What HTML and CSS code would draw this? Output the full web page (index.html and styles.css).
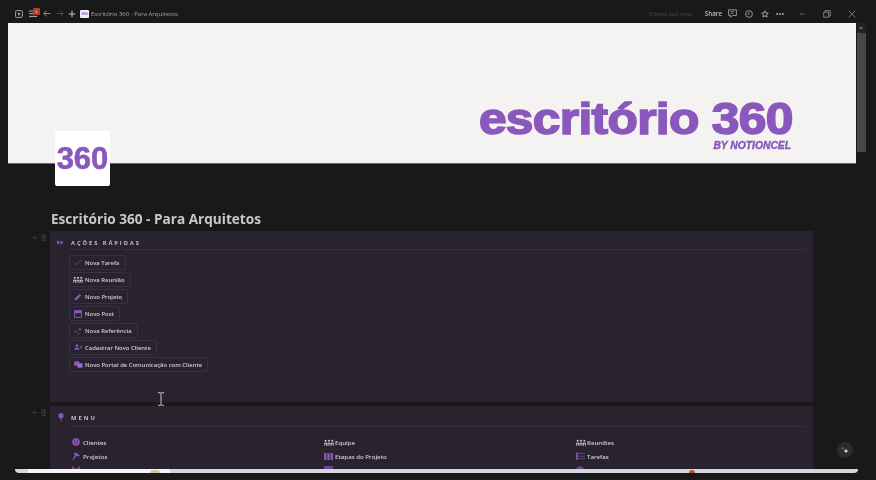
FILE: index.html
```html
<!DOCTYPE html>
<html lang="pt">
<head>
<meta charset="utf-8">
<title>Escritório 360 - Para Arquitetos</title>
<link rel="stylesheet" href="styles.css">
</head>
<body>
<svg class="sprite" width="0" height="0">
  <symbol id="people" viewBox="0 0 12 8"><g fill="currentColor"><circle cx="2" cy="2" r="1.2"/><circle cx="6" cy="2" r="1.2"/><circle cx="10" cy="2" r="1.2"/><path d="M.3 8V4.2h3.4V8h-1V5.5h-1.4V8zM4.3 8V4.2h3.4V8h-1V5.5H5.3V8zM8.3 8V4.2h3.4V8h-1V5.5H9.3V8z"/></g></symbol>
</svg>
<div class="app">
  <header class="titlebar">
    <div class="tb-left">
      <svg class="tb-a" width="8" height="8" viewBox="0 0 8 8"><rect x=".6" y=".6" width="6.8" height="6.8" rx="1" fill="none" stroke="#a0a0a0" stroke-width="1"/><path d="M2.6 2.4l3.2 1.6-1.4.5-.5 1.5z" fill="#cfcfcf"/></svg>
      <span class="menu-ic">
        <svg width="9" height="9" viewBox="0 0 9 9"><path d="M0 2h8M0 4.7h8M0 7.4h8" stroke="#b4b4b4" stroke-width="1"/></svg>
        <span class="badge">4</span>
      </span>
      <svg class="tb-b" width="8" height="9" viewBox="0 0 8 9"><path d="M7.5 4.5H1M3.8 1.5l-3 3 3 3" fill="none" stroke="#8c8c8c" stroke-width="1"/></svg>
      <svg class="tb-c" width="8" height="9" viewBox="0 0 8 9"><path d="M.5 4.5H7M4.2 1.5l3 3-3 3" fill="none" stroke="#4a4a4a" stroke-width="1"/></svg>
      <svg class="tb-c" width="8" height="8" viewBox="0 0 8 8"><path d="M4 .8v6.4M.8 4h6.4" stroke="#c8c8c8" stroke-width="1"/></svg>
      <span class="favicon">360</span>
      <span class="tb-title">Escritório 360 - Para Arquitetos</span>
    </div>
    <div class="tb-right">
      <span class="edited">Edited just now</span>
      <span class="share">Share</span>
      <svg width="9" height="9" viewBox="0 0 9 9"><path d="M.6.8h7.8v5.6H4.6L2.6 8.2V6.4h-2z" fill="none" stroke="#a0a0a0" stroke-width=".9"/><path d="M2.4 2.6h4M2.4 4.2h3" stroke="#a0a0a0" stroke-width=".7"/></svg>
      <svg width="8" height="8" viewBox="0 0 8 8"><circle cx="4" cy="4" r="3.4" fill="none" stroke="#a0a0a0" stroke-width=".9"/><path d="M4 2.2v2H2.6" fill="none" stroke="#a0a0a0" stroke-width=".8"/></svg>
      <svg class="tight" width="8" height="8" viewBox="0 0 10 10"><path d="M5 1l1.2 2.7 2.9.3-2.2 1.9.7 2.9L5 7.3 2.4 8.8l.7-2.9L.9 4l2.9-.3z" fill="none" stroke="#b4b4b4" stroke-width="1.1"/></svg>
      <svg width="8" height="4" viewBox="0 0 8 4"><circle cx="1.1" cy="2" r="1" fill="#adadad"/><circle cx="4" cy="2" r="1" fill="#adadad"/><circle cx="6.9" cy="2" r="1" fill="#adadad"/></svg>
      <span class="win-ctrls">
        <svg width="8" height="8" viewBox="0 0 8 8"><path d="M1.5 4h5" stroke="#666" stroke-width="1"/></svg>
        <svg width="8" height="8" viewBox="0 0 8 8"><path d="M.7 2.2h5v5h-5zM2 2V.7h5.3V6H6" fill="none" stroke="#8a8a8a" stroke-width=".9"/></svg>
        <svg width="8" height="8" viewBox="0 0 8 8"><path d="M.7.7l6.6 6.6M7.3.7L.7 7.3" stroke="#7c7c7c" stroke-width=".9"/></svg>
      </span>
    </div>
  </header>

  <div class="main">
    <div class="page">
      <section class="banner">
        <div class="wordmark">
          <span class="wm-title">escritório 360</span>
          <span class="wm-by">BY NOTIONCEL</span>
        </div>
      </section>
      <div class="content">
        <div class="page-icon">360</div>
        <h1 class="page-title">Escritório 360 - Para Arquitetos</h1>

        <section class="panel panel-actions">
          <span class="gutter"><i class="plus">+</i><i class="grip"></i></span>
          <h2 class="panel-head">
            <svg class="head-ic" width="7" height="5" viewBox="0 0 9 6"><path d="M0 0l4 3-4 3zM4.5 0l4 3-4 3z" fill="#8a56b8"/></svg>
            <span>AÇÕES RÁPIDAS</span>
          </h2>
          <div class="buttons">
            <div class="btn"><svg class="ic" width="8" height="7" viewBox="0 0 8 7"><path d="M.8 3.8l2 2L7.4 1" fill="none" stroke="#6f4a96" stroke-width=".9"/></svg>Nova Tarefa</div>
            <div class="btn"><svg class="ic wide"><use href="#people"/></svg>Nova Reunião</div>
            <div class="btn"><svg class="ic" width="8" height="8" viewBox="0 0 8 8"><path d="M.5 7.5l.6-2.2L5.6.8l1.6 1.6-4.5 4.5z" fill="#8a56b8"/></svg>Novo Projeto</div>
            <div class="btn"><svg class="ic" width="8" height="8" viewBox="0 0 8 8"><path d="M.6.6h6.8v6.8H.6z" fill="none" stroke="#8a56b8"/><path d="M.6.6h6.8v2.6H.6z" fill="#8a56b8"/></svg>Novo Post</div>
            <div class="btn"><svg class="ic" width="8" height="8" viewBox="0 0 8 8"><path d="M6 .5l.5 1.3 1.3.5-1.3.5L6 4.1l-.5-1.3-1.3-.5 1.3-.5z" fill="#8a56b8"/><circle cx="1.5" cy="4.6" r=".8" fill="#8a56b8"/><circle cx="4.5" cy="6.8" r=".8" fill="#8a56b8"/></svg>Nova Referência</div>
            <div class="btn"><svg class="ic" width="9" height="6" viewBox="0 0 11 7"><circle cx="3.5" cy="1.8" r="1.6" fill="#8a56b8"/><path d="M.5 7c0-2 1.2-3 3-3s3 1 3 3z" fill="#8a56b8"/><path d="M8.5 1.5v4M6.5 3.5h4" stroke="#8a56b8" stroke-width=".9"/></svg>Cadastrar Novo Cliente</div>
            <div class="btn"><svg class="ic" width="9" height="7" viewBox="0 0 11 8"><rect x="0" y="0" width="6.5" height="5.5" rx="1.5" fill="#8a56b8"/><rect x="4" y="2.5" width="6.5" height="5.5" rx="1.5" fill="#9a68c8"/></svg>Novo Portal de Comunicação com Cliente</div>
          </div>
        </section>

        <section class="panel panel-menu">
          <span class="gutter"><i class="plus">+</i><i class="grip"></i></span>
          <h2 class="panel-head">
            <svg class="head-ic" width="6" height="9" viewBox="0 0 6 9"><circle cx="3" cy="2.7" r="2.6" fill="#8a56b8"/><path d="M2.5 4h1l-.2 5h-.6z" fill="#8a56b8"/></svg>
            <span class="wide-track">MENU</span>
          </h2>
          <div class="menu-grid">
            <div class="mi"><svg width="8" height="8" viewBox="0 0 8 8"><circle cx="4" cy="4" r="3.8" fill="#8a56b8"/><circle cx="2.8" cy="3.2" r=".6" fill="#2a2330"/><circle cx="5.2" cy="3.2" r=".6" fill="#2a2330"/><path d="M2.4 5.2h3.2" stroke="#2a2330" stroke-width=".7"/></svg><span>Clientes</span></div>
            <div class="mi"><svg width="10" height="7"><use href="#people"/></svg><span>Equipe</span></div>
            <div class="mi"><svg width="10" height="7"><use href="#people"/></svg><span>Reuniões</span></div>
            <div class="mi"><svg width="8" height="8" viewBox="0 0 8 8"><path d="M.3 7.8L3 3 1.6 1.4 4 .4 7.8 3.4 6.8 4.4 4.6 3.8 1.4 8z" fill="#8a56b8"/></svg><span>Projetos</span></div>
            <div class="mi"><svg width="9" height="7" viewBox="0 0 9 7"><path d="M0 0h2.4v7H0zM3.3 0h2.4v7H3.3zM6.6 0H9v7H6.6z" fill="#8a56b8"/></svg><span>Etapas do Projeto</span></div>
            <div class="mi"><svg width="9" height="8" viewBox="0 0 9 8"><path d="M0 1h2v1.6H0zM3 1.3h6M0 3.4h2V5H0zM3 4.2h6M0 5.8h2v1.6H0zM3 6.6h6" fill="#8a56b8" stroke="#8a56b8" stroke-width=".6"/></svg><span>Tarefas</span></div>
            <div class="mi"><svg width="8" height="8" viewBox="0 0 8 8"><path d="M0 8V0l4 3 4-3v8z" fill="#6a4590"/></svg><span>Processos Padrão</span></div>
            <div class="mi"><svg width="9" height="8" viewBox="0 0 9 8"><rect width="9" height="8" fill="#6a4590"/></svg><span>Mural de Referências</span></div>
            <div class="mi"><svg width="8" height="8" viewBox="0 0 8 8"><circle cx="4" cy="4" r="3.8" fill="#6a4590"/></svg><span>Conteúdo e Posts</span></div>
          </div>
        </section>
      </div>
      <span class="fab"><svg width="8" height="8" viewBox="0 0 8 8"><path d="M5 2.4l.7 1.9 1.9.7-1.9.7L5 7.6l-.7-1.9L2.4 5l1.9-.7z" fill="#dcdcdc"/><path d="M1.8.8l.4 1 1 .4-1 .4-.4 1-.4-1-1-.4 1-.4z" fill="#9a9a9a"/></svg></span>
      <svg class="cursor" width="8" height="14" viewBox="0 0 8 14"><path d="M1 .7h2.2l.8.7.8-.7H7M1 13.3h2.2l.8-.7.8.7H7M4 1.4v11.2" fill="none" stroke="#c4c4c4" stroke-width="1"/></svg>
    </div>
    <div class="scrollbar"><i class="sb-arrow"></i><i class="sb-thumb"></i></div>
  </div>
  <div class="taskbar-edge">
    <i class="edge-lead"></i><i class="edge-white"><b class="dot-tan"></b></i><i class="edge-grey"><b class="dot-red"></b></i>
  </div>
</div>
</body>
</html>
```

FILE: styles.css
```css
* { box-sizing: border-box; }
html, body { margin: 0; padding: 0; background: #191919; }
body { font-family: "Open Sans", "Noto Sans", sans-serif; color: #d0ccd4; }
.sprite { position: absolute; }
.app { width: 876px; height: 480px; overflow: hidden; display: flex; flex-direction: column; background: #191919; color: #8a56b8; filter: blur(.35px); }

.titlebar { height: 23px; flex: none; display: flex; justify-content: space-between; align-items: center; padding: 4px 20px 0 15px; background: #191919; }
.tb-left, .tb-right { display: flex; align-items: center; }
.tb-a { margin-right: 6px; }
.tb-b { margin-right: 5px; }
.tb-c { margin-right: 4px; }
.menu-ic { position: relative; width: 9px; height: 9px; margin-right: 5px; display: block; }
.menu-ic svg { display: block; }
.badge { position: absolute; top: -1px; left: 4px; width: 7px; height: 7px; background: #b8382e; color: #f3d8d4; font-size: 4px; line-height: 7px; text-align: center; border-radius: 1px; }
.favicon { width: 9px; height: 8px; margin-right: 2px; background: #f2eef6; color: #8a56b8; font: 700 4px/8px "Liberation Sans", sans-serif; text-align: center; border-radius: 1px; }
.tb-title { font-size: 6px; color: #a4a4a4; }
.tb-right { gap: 8px; }
.tight { margin-right: -1px; }
.edited { font-size: 6px; color: #474747; margin-right: 5px; }
.share { font-size: 6.2px; font-weight: 600; color: #bcbcbc; margin-right: -2px; }
.win-ctrls { display: flex; align-items: center; gap: 17px; margin-left: 6px; }

.main { flex: 1; min-height: 0; display: flex; padding-left: 8px; }
.page { position: relative; width: 848px; height: 100%; overflow: hidden; }
.banner { height: 141px; display: flex; justify-content: flex-end; align-items: flex-start; padding: 74px 63px 0 0; background: #f5f3f1; border-bottom: 1px solid #6a6a6a; }
.wordmark { display: flex; flex-direction: column; align-items: flex-end; }
.wm-title { font: 700 44px/44px "Liberation Sans", sans-serif; letter-spacing: -0.6px; color: #8a58bd; -webkit-text-stroke: 1.6px #8a58bd; white-space: nowrap; transform: scaleX(1.13); transform-origin: right center; }
.wm-by { font: italic 700 10.3px/10px "Liberation Sans", sans-serif; color: #8a58bd; margin: 0 2px 0 0; -webkit-text-stroke: .4px #8a58bd; }

.content { position: relative; padding: 45px 43px 0 42px; }
.page-icon { position: absolute; left: 47px; top: -33px; width: 55px; height: 55px; background: #fff; border-radius: 2px; color: #8a58bd; text-align: center; font: 700 31px/56px "Liberation Sans", sans-serif; -webkit-text-stroke: .6px #8a58bd; }
.page-title { margin: 0 0 2px 1px; height: 20px; font-size: 13.6px; line-height: 20px; font-weight: 700; color: #cbc8c4; }

.panel { position: relative; background: #29232f; }
.panel-actions { height: 171px; margin-bottom: 4px; }
.panel-menu { height: 80px; }
.gutter { position: absolute; left: -19px; top: 0; display: flex; align-items: center; gap: 3px; }
.plus { font-style: normal; font-size: 13px; line-height: 12px; color: #363636; }
.grip { width: 5px; height: 7px; background: radial-gradient(circle, #3e3e3e 0.8px, transparent 1px) 0 0 / 2.5px 2.5px; }
.panel-head { margin: 0 7px 0 19px; height: 19px; padding-top: 5px; display: flex; align-items: center; font-size: 5.8px; font-weight: 700; letter-spacing: 1.9px; color: #c2bdc6; border-bottom: 1px solid #352e3c; position: relative; }
.head-ic { position: absolute; left: -12px; top: 9px; }
.panel-head span { margin-left: 2px; }
.wide-track { letter-spacing: 2px; }
.panel-menu .panel-head { height: 21px; padding-top: 3px; }
.panel-menu .head-ic { top: 7px; left: -11px; }

.buttons { padding: 5px 0 0 19px; display: flex; flex-direction: column; align-items: flex-start; gap: 2px; }
.btn { height: 15px; padding: 0 5px 0 15px; position: relative; display: flex; align-items: center; border: 1px solid #38313f; border-radius: 2px; font-size: 5.9px; font-weight: 600; color: #d2ced6; white-space: nowrap; }
.ic { position: absolute; left: 4px; top: 3px; }
.ic.wide { left: 3px; width: 10px; height: 7px; }

.menu-grid { display: grid; grid-template-columns: repeat(3, 252px); grid-auto-rows: 14px; padding: 8px 0 0 21.5px; }
.mi { display: grid; grid-template-columns: 11.5px 1fr; align-items: center; font-size: 6.1px; font-weight: 600; color: #d2ced6; white-space: nowrap; }

.fab { position: absolute; left: 829px; top: 419px; width: 16px; height: 16px; border-radius: 50%; background: #2b2b2b; display: flex; align-items: center; justify-content: center; }
.cursor { position: absolute; left: 149px; top: 369px; }

.scrollbar { width: 9px; margin-left: 1px; display: flex; flex-direction: column; align-items: stretch; background: #222; height: 129px; }
.sb-arrow { display: block; height: 10px; position: relative; }
.sb-arrow::after { content: ""; position: absolute; left: 2px; top: 3px; border: 2.5px solid transparent; border-top: 0; border-bottom: 3px solid #666; }
.sb-thumb { display: block; flex: 1; background: #474747; }

.taskbar-edge { flex: none; height: 11px; padding-left: 15px; display: flex; align-items: flex-start; }
.edge-lead { display: block; width: 13px; height: 4px; background: #d3d6dc; border-radius: 0 0 0 6px; }
.edge-white { display: block; width: 142px; height: 4px; background: #f4f4f6; position: relative; }
.edge-grey { display: block; width: 688px; height: 4px; background: #d3d6dc; border-radius: 0 0 8px 0; position: relative; }
.dot-tan { position: absolute; left: 122px; top: 1px; width: 10px; height: 3px; border-radius: 5px 5px 0 0; background: #d8c6a0; }
.dot-red { position: absolute; left: 519px; top: 1px; width: 6px; height: 3px; border-radius: 3px 3px 0 0; background: #c84a28; }
```
